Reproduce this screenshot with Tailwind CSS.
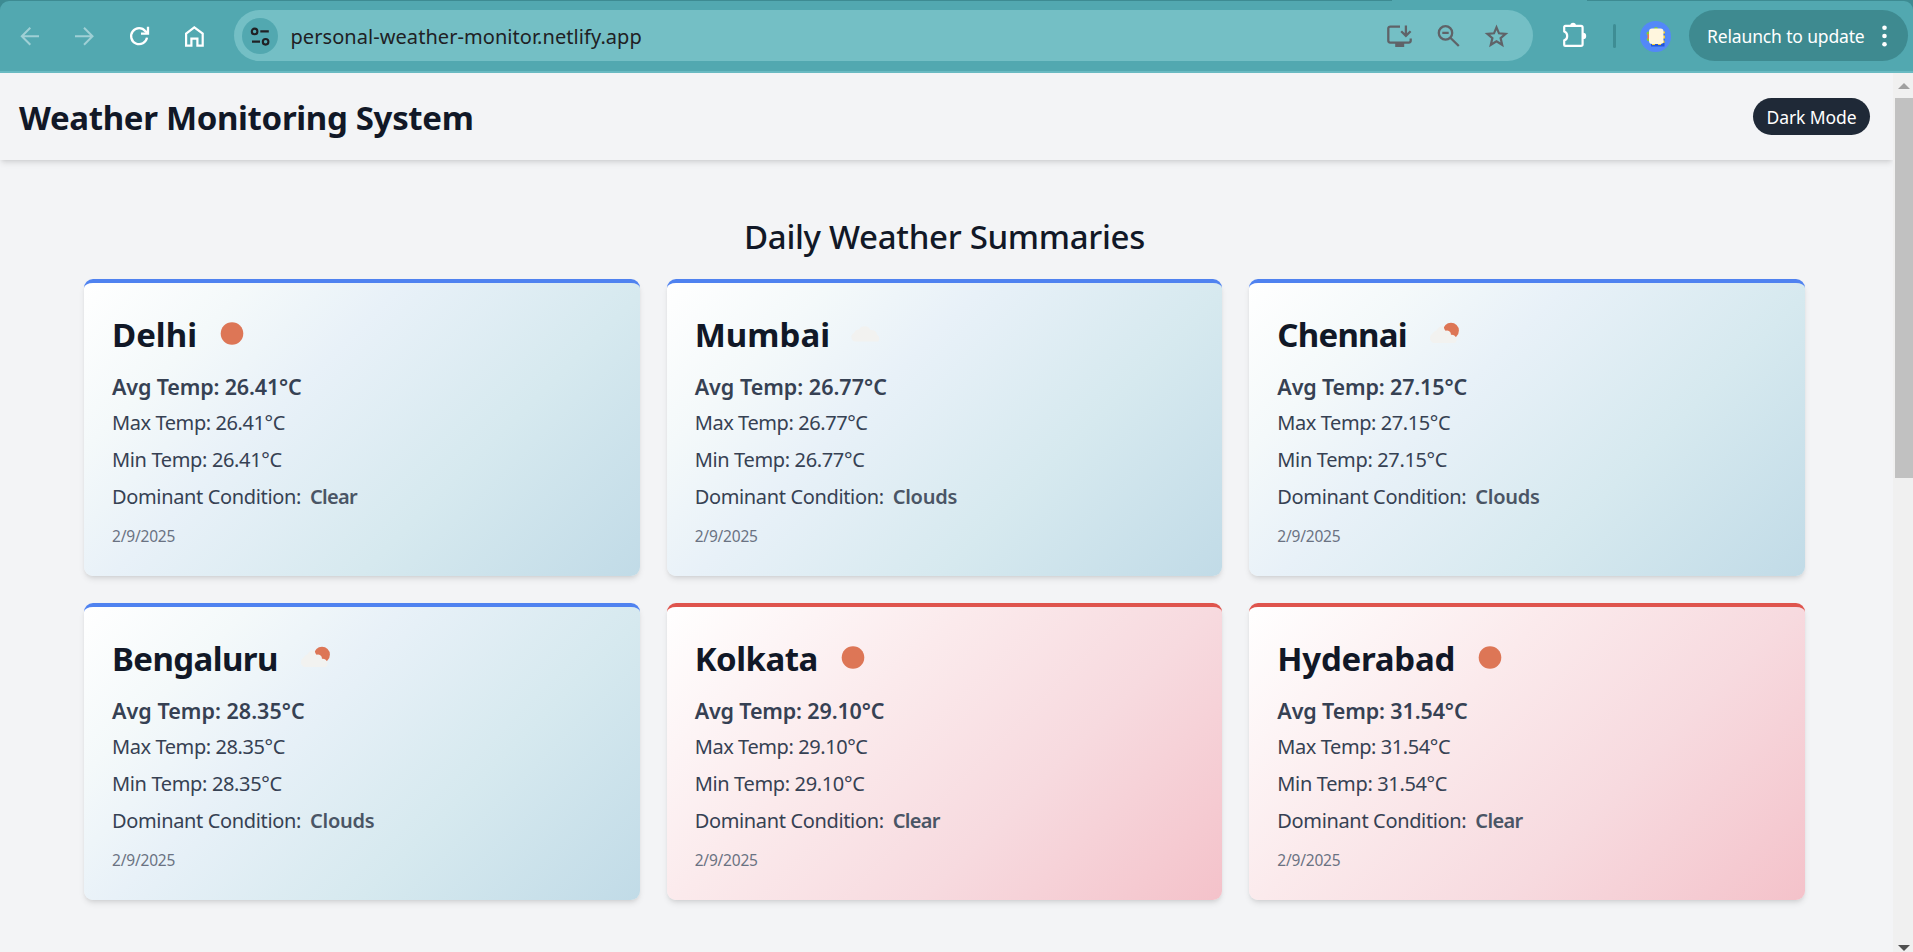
<!DOCTYPE html>
<html lang="en">
<head>
<meta charset="utf-8">
<title>Weather Monitoring System</title>
<script src="https://cdn.jsdelivr.net/npm/@tailwindcss/browser@4"></script>
</head>
<body class="h-[952px] w-[1913px] overflow-hidden bg-gray-100 font-['Noto_Sans','Open_Sans',sans-serif] text-[#111827]">

<!-- Browser toolbar -->
<div class="relative h-[73px] bg-[#3d8b92] pt-px">
  <div class="absolute left-[1392px] top-0 h-px w-[195px] bg-[#52a8b0]"></div>
  <div class="relative flex h-[72px] items-center rounded-t-[9px] border-b-2 border-[#69bac2] bg-[#52a8b0] pb-px pl-[2px]">
    <div class="flex w-[55px] justify-center">
      <svg width="27" height="27" viewBox="0 0 27 27" fill="none" stroke="#9fd0d5" stroke-width="2"><path d="M23 14.2H6M14.3 5.7L5.8 14.2L14.3 22.7"/></svg>
    </div>
    <div class="flex w-[55px] justify-center">
      <svg width="27" height="27" viewBox="0 0 27 27" fill="none" stroke="#9fd0d5" stroke-width="2"><path d="M4 14.2H21.4M13 5.7L21.5 14.2L13 22.7"/></svg>
    </div>
    <div class="flex w-[55px] justify-center">
      <svg width="27" height="27" viewBox="0 0 27 27" fill="none" stroke="#fff" stroke-width="2.3"><path d="M21 15.6A8 8 0 1 1 19.4 9.2L21.8 11.4"/><path d="M22 4.8V11.6H15"/></svg>
    </div>
    <div class="flex w-[55px] justify-center">
      <svg width="27" height="27" viewBox="0 0 27 27" fill="none" stroke="#fff" stroke-width="2.2"><path d="M5.1 11.6L13.3 5.4L21.7 11.6V23.6H16.4V16.6H10.4V23.6H5.1Z"/></svg>
    </div>

    <!-- Address field -->
    <div class="ml-[12px] flex h-[51px] w-[1299px] items-center rounded-full bg-[#74bfc5] pl-[8px] pr-[12px]">
      <div class="flex size-[36px] items-center justify-center rounded-full bg-[#52a8b0]">
        <svg width="20" height="20" viewBox="0 0 20 20" fill="none" stroke="#202124" stroke-width="2.1"><circle cx="4.6" cy="5.4" r="2.8"/><path d="M10.3 5.4H18.8M2 15.6H10"/><circle cx="15.6" cy="15.8" r="2.8"/></svg>
      </div>
      <div class="ml-[12.500px] grow whitespace-nowrap pt-[2px] text-[20px] leading-[28px] tracking-[0.06px] text-[#202124]">personal-weather-monitor.netlify.app</div>
      <div class="flex w-[48.5px] justify-center">
        <svg width="27" height="27" viewBox="0 0 27 27" fill="none" stroke="#5f6368" stroke-width="2.3"><path d="M14 4.6H4.3a2 2 0 0 0-2 2V18.6a2 2 0 0 0 2 2H22.7a2 2 0 0 0 2-2V16.6"/><path d="M19.9 3.4V13M15.2 9.2L19.9 13.8L24.6 9.2"/><path d="M9.2 20h9v5h-9z" fill="#5f6368" stroke="none"/></svg>
      </div>
      <div class="flex w-[48.5px] justify-center">
        <svg width="27" height="27" viewBox="0 0 27 27" fill="none" stroke="#5f6368" stroke-width="2.3"><circle cx="10.5" cy="10.9" r="6.7"/><path d="M15.3 15.7L23.8 24M7.3 10.9H13.7"/></svg>
      </div>
      <div class="flex w-[48.5px] justify-center">
        <svg width="27" height="27" viewBox="0 0 27 27" fill="none" stroke="#5f6368" stroke-width="2.2"><path d="M13.5 5.3L16 11.3L22.6 11.8L17.6 16.100L19.2 22.800L13.5 19.300L7.8 22.800L9.400 16.100L4.4 11.8L11 11.3Z"/></svg>
      </div>
    </div>

    <!-- Extensions -->
    <svg class="ml-[28px]" width="27" height="27" viewBox="0 0 27 27"><path d="M3.2 4.9a1 1 0 0 1 1-1H20a1.6 1.6 0 0 1 1.6 1.6V22.3A1.6 1.6 0 0 1 20 23.9H4.2a1 1 0 0 1-1-1V18.4C5 18 6.2 16.2 6.2 14S5 10 3.2 9.500Z" fill="none" stroke="#fff" stroke-width="2.2" stroke-linejoin="round"/><path d="M9.300 3.600a2.800 2.800 0 0 1 5.600 0ZM22 10.700a3.200 3.200 0 0 1 0 6.400Z" fill="#fff"/></svg>
    <div class="ml-[25px] mt-px h-[24px] w-[3px] rounded-full bg-[#3e8d94]"></div>
    <svg class="ml-[24px] mt-[2px]" width="31" height="31" viewBox="0 0 31 31">
      <circle cx="15.500" cy="15.500" r="15.500" fill="#5388f8"/>
      <path d="M11 12h13.500v13.500H11z" fill="#2456d6"/>
      <circle cx="16" cy="8" r="2" fill="#84c93c"/><circle cx="8.500" cy="12.500" r="2" fill="#84c93c"/><circle cx="8.500" cy="18.500" r="1.800" fill="#84c93c"/>
      <path d="M7.500 13h3v5h-3z" fill="#ee7b4d"/>
      <path d="M23 10.500h2v2h-2zM23 14.500h2v3h-2zM22.500 19.500h2v2.500h-2zM12 22h3v2h-3zM18 22h3v2h-3z" fill="#f6cf2f"/>
      <rect x="9" y="7.500" width="14.500" height="15.500" rx="3" fill="#fff6de"/>
    </svg>

    <div class="ml-[18px] flex h-[51px] w-[219px] items-center rounded-full bg-[#3e8a90] pl-[18px] text-white">
      <span class="whitespace-nowrap text-[17.500px] leading-[26px] tracking-[-0.15px]">Relaunch to update</span>
      <svg class="ml-[15px] mt-px" width="9" height="24" viewBox="0 0 9 24" fill="#fff"><circle cx="4.500" cy="3.800" r="2.300"/><circle cx="4.500" cy="12" r="2.300"/><circle cx="4.500" cy="20.200" r="2.300"/></svg>
    </div>
  </div>
</div>

<!-- Viewport: page and scrollbar -->
<div class="flex h-[879px]">
  <div class="w-[1893px] overflow-hidden">
    <header class="relative flex h-[87px] items-center justify-between bg-gray-100 pl-[19px] pr-[23px] shadow-md">
      <h1 class="pt-[2px] text-[33px] font-bold leading-[40px] tracking-[-0.33px]">Weather Monitoring System</h1>
      <button class="h-[37px] w-[117px] rounded-full bg-[#1f2937] pt-px text-[17.500px] leading-[26px] tracking-[-0.1px] text-white">Dark Mode</button>
    </header>

    <main class="pl-[84px] pr-[88px] pt-[57px]">
      <h2 class="mb-[22px] text-center text-[33px] font-medium leading-[40px] tracking-[-0.3px]">Daily Weather Summaries</h2>
      <div id="cards" class="grid grid-cols-3 gap-[27px]"></div>
    </main>
  </div>

  <!-- Scrollbar -->
  <div class="flex w-[20px] flex-col items-end bg-[#f0f0f0]">
    <div class="flex h-[25px] w-[18px] justify-center pt-[10px]"><svg width="12" height="6" viewBox="0 0 12 6"><path d="M6 0L12 6H0Z" fill="#a0a0a0"/></svg></div>
    <div class="h-[380px] w-[18px] bg-[#c1c1c1]"></div>
    <div class="mt-auto flex h-[7px] w-[18px] justify-center"><svg width="12" height="6" viewBox="0 0 12 6"><path d="M6 6L12 0H0Z" fill="#505050"/></svg></div>
  </div>
</div>

<script>
const icons = {
  sun: '<circle cx="26" cy="23.5" r="11.3" fill="#dd7656"/>',
  cloud: '<path d="M16.500 31.500a4.500 4.500 0 0 1-1.500-8.600 5 5 0 0 1 5-3.500 6.500 6.500 0 0 1 11.500 0.600 5.500 5.500 0 0 1 6.500 4.500 5.500 5.500 0 0 1 1.500 7Z" fill="#f2f2f0"/>',
  partly: '<circle cx="35" cy="20.600" r="7.900" fill="#dd7656"/><path d="M17 33a5.500 5.500 0 0 1-.5-9.500 7 7 0 0 1 4-3 7 7 0 0 1 7.200-4.200 8 8 0 0 0 1.800 4.500 4 4 0 0 1 5.500 3.900 5 5 0 0 1 5.500 4.500 3 3 0 0 1-2.500 3.800Z" fill="#f2f2f0"/>',
};
const themes = {
  cool: 'border-[#4f82f0] bg-[linear-gradient(135deg,#ffffff,#f4f9fa_20%,#e8f1f8_38%,#d6e9ef_67%,#c1dbe7)]',
  warm: 'border-[#df544d] bg-[linear-gradient(135deg,#ffffff,#fbeaec_36%,#f7dadf_65%,#f4c2ca)]',
};
const clear = ['Clear', 'tracking-[-0.7px]'], clouds = ['Clouds', 'tracking-[-0.27px]'];
const cities = [
  ['Delhi', '', '26.41', 'tracking-[-0.15px]', clear, 'sun', 'cool'],
  ['Mumbai', 'tracking-[0.05px]', '26.77', 'tracking-[0px]', clouds, 'cloud', 'cool'],
  ['Chennai', 'tracking-[-0.75px]', '27.15', 'tracking-[-0.15px]', clouds, 'partly', 'cool'],
  ['Bengaluru', 'tracking-[-0.6px]', '28.35', 'tracking-[0.03px]', clouds, 'partly', 'cool'],
  ['Kolkata', 'tracking-[-0.5px]', '29.10', 'tracking-[-0.15px]', clear, 'sun', 'warm'],
  ['Hyderabad', 'tracking-[-0.25px]', '31.54', 'tracking-[-0.12px]', clear, 'sun', 'warm'],
];
document.getElementById('cards').innerHTML = cities.map(([name, nameTrack, t, avgTrack, [cond, condTrack], icon, theme]) => `
  <article class="h-[297px] rounded-[9px] border-t-4 bg-origin-border pl-[28px] pt-[27px] shadow-md ${themes[theme]}">
    <div class="flex h-[48px] items-center">
      <h3 class="pt-[2px] text-[33px] font-bold leading-[46px] ${nameTrack}">${name}</h3>
      <svg class="ml-[9px]" width="56" height="48" viewBox="0 0 56 48">${icons[icon]}</svg>
    </div>
    <p class="mb-[1.5px] mt-[13px] text-[21.5px] font-semibold leading-[32px] text-gray-700 ${avgTrack}">Avg Temp: ${t}°C</p>
    <p class="text-[20px] leading-[36.5px] tracking-[-0.42px] text-gray-700">Max Temp: ${t}°C</p>
    <p class="pt-[0.5px] text-[20px] leading-[36.5px] tracking-[-0.35px] text-gray-700">Min Temp: ${t}°C</p>
    <p class="flex gap-[9px] text-[20px] leading-[37px] text-gray-700"><span class="tracking-[-0.35px]">Dominant Condition:</span><span class="font-semibold text-gray-600 ${condTrack}">${cond}</span></p>
    <p class="mt-[9px] text-[15.5px] leading-[24px] tracking-[-0.2px] text-gray-500">2/9/2025</p>
  </article>`).join('');
</script>
</body>
</html>
